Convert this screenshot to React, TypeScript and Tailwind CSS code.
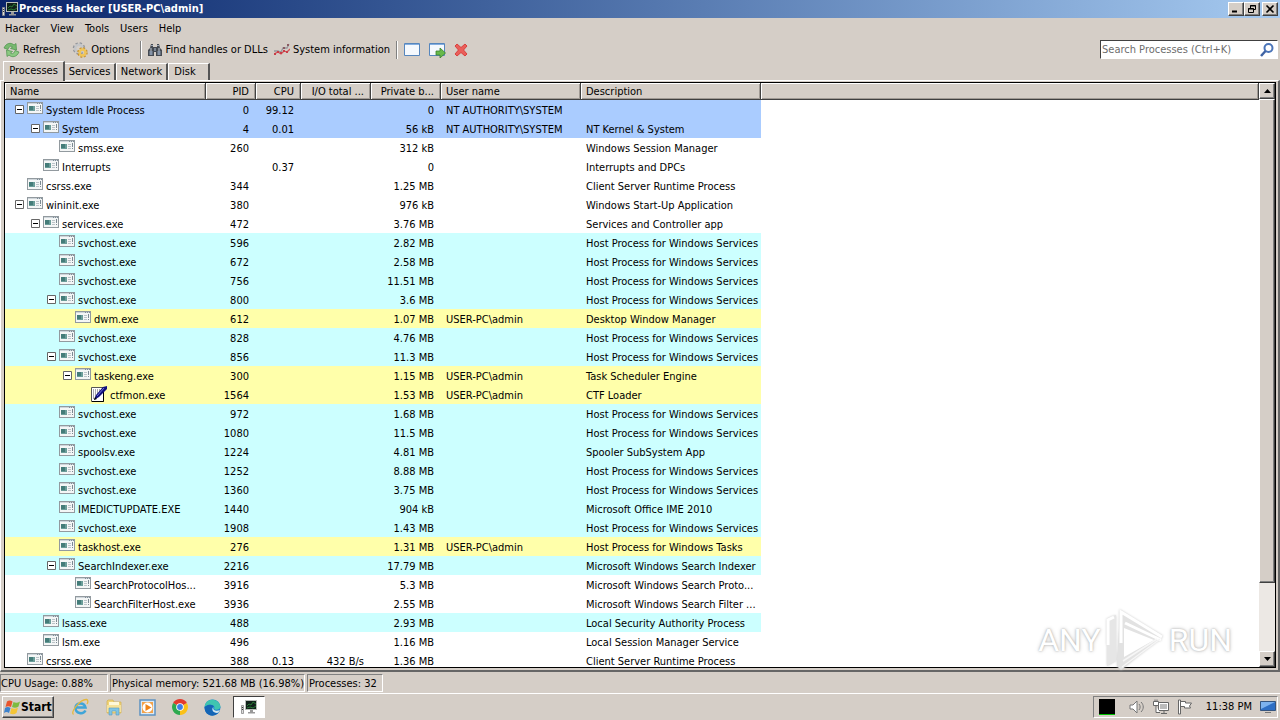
import type { ReactNode } from "react";

type Tone = "system" | "service" | "own" | "plain";

interface Process {
    name: string;
    depth: number;
    open?: boolean;
    pid: string;
    cpu?: string;
    io?: string;
    mem: string;
    user?: string;
    desc?: string;
    tone: Tone;
}

const tones: Record<Tone, string> = {
    system: "bg-[#aaccff]",
    service: "bg-[#ccffff]",
    own: "bg-[#ffffaa]",
    plain: "bg-white",
};

const HOST = "Host Process for Windows Services";
const SYSTEM = "NT AUTHORITY\\SYSTEM";
const ADMIN = "USER-PC\\admin";

const processes: Process[] = [
    { name: "System Idle Process", depth: 0, open: true, pid: "0", cpu: "99.12", mem: "0", user: SYSTEM, tone: "system" },
    { name: "System", depth: 1, open: true, pid: "4", cpu: "0.01", mem: "56 kB", user: SYSTEM, desc: "NT Kernel & System", tone: "system" },
    { name: "smss.exe", depth: 2, pid: "260", mem: "312 kB", desc: "Windows Session Manager", tone: "plain" },
    { name: "Interrupts", depth: 1, pid: "", cpu: "0.37", mem: "0", desc: "Interrupts and DPCs", tone: "plain" },
    { name: "csrss.exe", depth: 0, pid: "344", mem: "1.25 MB", desc: "Client Server Runtime Process", tone: "plain" },
    { name: "wininit.exe", depth: 0, open: true, pid: "380", mem: "976 kB", desc: "Windows Start-Up Application", tone: "plain" },
    { name: "services.exe", depth: 1, open: true, pid: "472", mem: "3.76 MB", desc: "Services and Controller app", tone: "plain" },
    { name: "svchost.exe", depth: 2, pid: "596", mem: "2.82 MB", desc: HOST, tone: "service" },
    { name: "svchost.exe", depth: 2, pid: "672", mem: "2.58 MB", desc: HOST, tone: "service" },
    { name: "svchost.exe", depth: 2, pid: "756", mem: "11.51 MB", desc: HOST, tone: "service" },
    { name: "svchost.exe", depth: 2, open: true, pid: "800", mem: "3.6 MB", desc: HOST, tone: "service" },
    { name: "dwm.exe", depth: 3, pid: "612", mem: "1.07 MB", user: ADMIN, desc: "Desktop Window Manager", tone: "own" },
    { name: "svchost.exe", depth: 2, pid: "828", mem: "4.76 MB", desc: HOST, tone: "service" },
    { name: "svchost.exe", depth: 2, open: true, pid: "856", mem: "11.3 MB", desc: HOST, tone: "service" },
    { name: "taskeng.exe", depth: 3, open: true, pid: "300", mem: "1.15 MB", user: ADMIN, desc: "Task Scheduler Engine", tone: "own" },
    { name: "ctfmon.exe", depth: 4, pid: "1564", mem: "1.53 MB", user: ADMIN, desc: "CTF Loader", tone: "own" },
    { name: "svchost.exe", depth: 2, pid: "972", mem: "1.68 MB", desc: HOST, tone: "service" },
    { name: "svchost.exe", depth: 2, pid: "1080", mem: "11.5 MB", desc: HOST, tone: "service" },
    { name: "spoolsv.exe", depth: 2, pid: "1224", mem: "4.81 MB", desc: "Spooler SubSystem App", tone: "service" },
    { name: "svchost.exe", depth: 2, pid: "1252", mem: "8.88 MB", desc: HOST, tone: "service" },
    { name: "svchost.exe", depth: 2, pid: "1360", mem: "3.75 MB", desc: HOST, tone: "service" },
    { name: "IMEDICTUPDATE.EXE", depth: 2, pid: "1440", mem: "904 kB", desc: "Microsoft Office IME 2010", tone: "service" },
    { name: "svchost.exe", depth: 2, pid: "1908", mem: "1.43 MB", desc: HOST, tone: "service" },
    { name: "taskhost.exe", depth: 2, pid: "276", mem: "1.31 MB", user: ADMIN, desc: "Host Process for Windows Tasks", tone: "own" },
    { name: "SearchIndexer.exe", depth: 2, open: true, pid: "2216", mem: "17.79 MB", desc: "Microsoft Windows Search Indexer", tone: "service" },
    { name: "SearchProtocolHos...", depth: 3, pid: "3916", mem: "5.3 MB", desc: "Microsoft Windows Search Proto...", tone: "plain" },
    { name: "SearchFilterHost.exe", depth: 3, pid: "3936", mem: "2.55 MB", desc: "Microsoft Windows Search Filter ...", tone: "plain" },
    { name: "lsass.exe", depth: 1, pid: "488", mem: "2.93 MB", desc: "Local Security Authority Process", tone: "service" },
    { name: "lsm.exe", depth: 1, pid: "496", mem: "1.16 MB", desc: "Local Session Manager Service", tone: "plain" },
    { name: "csrss.exe", depth: 0, pid: "388", cpu: "0.13", io: "432 B/s", mem: "1.36 MB", desc: "Client Server Runtime Process", tone: "plain" },
];

const indents = ["pl-[10px]", "pl-[26px]", "pl-[42px]", "pl-[58px]", "pl-[74px]"];

const raised = "border border-t-white border-l-white border-r-[#404040] border-b-[#404040] bg-[#d5cec7] shadow-[inset_-1px_-1px_0_#808080]";
const sunken = "border border-t-[#808080] border-l-[#808080] border-r-white border-b-white";

function AppIcon() {
    return (
        <svg width="16" height="16" viewBox="0 0 16 16" className="shrink-0">
            <path d="M.5 6.500h2v8h-2z" fill="#ddd" stroke="#888" strokeWidth=".8" />
            <path d="M1 8.500h1M1 10.500h1" stroke="#333" />
            <rect x="4.500" y="1.500" width="11" height="9" fill="#10201a" stroke="#b8bdb8" />
            <path d="M6 7l2-2 2 1 2-3 3 2M6 9l3-1 3 1 3-2" stroke="#2f8f3c" strokeWidth=".8" fill="none" />
            <path d="M9 11h3v2h2v1.500H7V13h2z" fill="#999" />
        </svg>
    );
}

function ProcessIcon() {
    return (
        <svg width="16" height="12" viewBox="0 0 16 12" className="mt-[2px] shrink-0">
            <rect x=".5" y=".5" width="15" height="11" fill="#f4f6f6" stroke="#929a9f" />
            <path d="M1 1.500h14" stroke="#cfd6db" />
            <path d="M10 1.500h1M12 1.500h1M14 1.500h1" stroke="#7f8d98" />
            <rect x="2" y="4" width="6" height="5" fill="#6a9d99" />
            <path d="M2 4h4v4H2z" fill="#447c79" />
            <path d="M9 4.500h3M9 6.500h3M9 8.500h3" stroke="#bcc4c9" />
            <path d="M13.500 3v4M13.500 8v1" stroke="#7c8a93" />
        </svg>
    );
}

function PenIcon() {
    return (
        <svg width="16" height="16" viewBox="0 0 16 16" className="mt-px shrink-0">
            <path d="M.5 1.500h12v14H.5z" fill="#fff" stroke="#555" />
            <path d="M2 4h9M2 6h8M2 8h6M2 10h4M2 12h3" stroke="#555" strokeDasharray="1 1" />
            <path d="M12.500 5v10.500H1" stroke="#000" fill="none" />
            <path d="M3 14l2-5 7-8 4-1v3l-8 8z" fill="#10107c" />
            <path d="M6 10l7-8" stroke="#7474dd" />
            <path d="M3 14l1-3 2 2z" fill="#000" />
        </svg>
    );
}

function RefreshIcon() {
    return (
        <svg width="17" height="16" viewBox="0 0 17 16">
            <path d="M1 6C3 1 8 0 11 3l2-1.500.5 6.500-6-1.500L9.500 5C7.500 3.500 6 4.500 5 7.500z" fill="#79ba70" stroke="#4b8f4a" strokeWidth=".7" />
            <path d="M16 10c-2 5-7 6-10 3l-2 1.500L3.500 8l6 1.500L7.500 11c2 1.500 3.500.5 4.500-2.500z" fill="#8cc982" stroke="#4b8f4a" strokeWidth=".7" />
        </svg>
    );
}

function GearIcon() {
    return (
        <svg width="16" height="16" viewBox="0 0 16 16" fill="none">
            <circle cx="7" cy="6.500" r="5" stroke="#94969b" strokeWidth="2.500" strokeDasharray="2.200 1.730" />
            <circle cx="7" cy="6.500" r="3.800" stroke="#c4c6c9" strokeWidth="2.500" />
            <circle cx="10.500" cy="10.500" r="4" stroke="#c48f2e" strokeWidth="2.500" strokeDasharray="1.800 1.340" />
            <circle cx="10.500" cy="10.500" r="2.900" stroke="#f0c456" strokeWidth="2.500" />
        </svg>
    );
}

function BinocularsIcon() {
    return (
        <svg width="14" height="14" viewBox="0 0 14 14">
            <path d="M3 1h2v3h4V1h2l1 4 2 2v6H8V9H6v4H0V7l2-2z" fill="#454a52" />
            <path d="M3 2.500h2M9 2.500h2" stroke="#9aa5b4" />
            <path d="M1.500 8h3v4h-3zM9.500 8h3v4h-3z" fill="#8694a8" />
            <path d="M3 5v3M11 5v3" stroke="#c2cad4" />
            <path d="M6 5h2v3H6z" fill="#7b8694" />
        </svg>
    );
}

function GraphIcon() {
    return (
        <svg width="16" height="14" viewBox="0 0 16 14" fill="none">
            <path d="M0 8h4l3 1 2-4 4 0 2-4" stroke="#97979c" strokeWidth="1.300" />
            <path d="M0 11l4-2 3 2 3-3 3 1 3-3" stroke="#d3545a" strokeWidth="1.300" />
            <path d="M0 10h2v2H0zM3 8h2v2H3zM6 9h2v2H6zM9 7h2v2H9zM12 8h2v2h-2z" fill="#c93e48" />
            <path d="M9 4h2v2H9zM13 1h2v2h-2z" fill="#8b5a62" />
        </svg>
    );
}

function WindowIcon({ arrow = false }: { arrow?: boolean }) {
    return (
        <svg width="17" height="16" viewBox="0 0 17 16">
            <path d="M.5 1.500h15v12H.5z" fill="#f5f9fe" stroke="#5686bd" />
            <path d="M1 2.500h14" stroke="#84aee0" />
            {arrow && <path d="M7 9h4V6l5.500 5-5.500 5v-3H7z" fill="#67b94a" stroke="#3b812d" strokeWidth=".8" />}
        </svg>
    );
}

function CrossIcon() {
    return (
        <svg width="14" height="14" viewBox="0 0 14 14">
            <path d="M1 3l2-2 4 3.500L11 1l2 2-3.500 4L13 11l-2 2-4-3.500L3 13l-2-2 3.500-4z" fill="#ea5f5a" stroke="#d9403e" strokeLinejoin="round" />
        </svg>
    );
}

function ToolButton({ icon, label }: { icon: ReactNode; label: string }) {
    return (
        <button className="flex h-5 items-center gap-[3px] whitespace-nowrap">
            {icon}
            {label}
        </button>
    );
}

function Separator() {
    return <span className="h-[18px] w-[2px] border-l border-[#808080] bg-white" />;
}

function CaptionButton({ label, children }: { label: string; children: ReactNode }) {
    return (
        <button aria-label={label} className={`flex h-[14px] w-4 items-center justify-center ${raised}`}>
            <svg width="10" height="10" viewBox="0 0 10 10" fill="none" stroke="#000">
                {children}
            </svg>
        </button>
    );
}

function ScrollButton({ label, d }: { label: string; d: string }) {
    return (
        <button aria-label={label} className={`flex h-4 w-4 shrink-0 items-center justify-center ${raised}`}>
            <svg width="7" height="4" viewBox="0 0 7 4">
                <path d={d} />
            </svg>
        </button>
    );
}

function Head({ children, right }: { children?: ReactNode; right?: boolean }) {
    return (
        <th
            className={`h-[17px] overflow-hidden bg-[#d5cec7] pt-px pb-0 font-normal whitespace-nowrap shadow-[inset_-1px_-1px_0_#404040,inset_1px_1px_0_#fff,inset_-2px_-2px_0_#a09a94] ${right ? "pr-[7px] pl-0 text-right" : "px-[5px] text-left"}`}
        >
            {children}
        </th>
    );
}

function ProcessRow({ p }: { p: Process }) {
    const cell = `pt-[3px] pr-[7px] pb-0 pl-0 text-right ${tones[p.tone]}`;
    const textCell = `pt-[3px] pr-0 pb-0 pl-[5px] ${tones[p.tone]}`;
    return (
        <tr className="h-[19px] whitespace-nowrap">
            <td className={`p-0 ${tones[p.tone]}`}>
                <div className={`flex h-[19px] items-start gap-[3px] ${indents[p.depth]}`}>
                    {p.open ? (
                        <button aria-label={`Collapse ${p.name}`} className="mt-[5px] h-[9px] w-[9px] shrink-0">
                            <svg width="9" height="9" viewBox="0 0 9 9">
                                <path d="M.5 .5h8v8h-8z" fill="#fff" stroke="#666" />
                                <path d="M2 4.500h5" stroke="#000" />
                            </svg>
                        </button>
                    ) : (
                        <span className="w-[9px] shrink-0" />
                    )}
                    {p.name === "ctfmon.exe" ? <PenIcon /> : <ProcessIcon />}
                    <span className="pt-[3px]">{p.name}</span>
                </div>
            </td>
            <td className={cell}>{p.pid}</td>
            <td className={cell}>{p.cpu}</td>
            <td className={cell}>{p.io}</td>
            <td className={cell}>{p.mem}</td>
            <td className={textCell}>{p.user}</td>
            <td className={textCell}>{p.desc}</td>
            <td className="p-0" />
        </tr>
    );
}

function Watermark() {
    return (
        <div className="pointer-events-none absolute right-[43px] -bottom-1 flex items-center gap-1 font-[Roboto,'Liberation_Sans',sans-serif] text-[32px] leading-[62px] text-white [text-shadow:0_0_2px_#aaa,0_0_4px_#ccc]">
            <span>ANY</span>
            <svg width="60" height="62" viewBox="0 0 60 62" className="drop-shadow-[0_0_1px_#ccc]">
                <path d="M2 10l9-4v46l-9 5z" fill="#e6e6e6" />
                <path d="M15 1l43 26-42 34-4-4z" fill="#e2e2e2" />
                <path d="M19 19l30 12-30 17z" fill="#fff" />
                <path d="M3 36V11l6-3M16 34V3l41 25M20 14l36 17" stroke="#fff" strokeWidth="3" fill="none" />
                <path d="M18 52l34-22M17 58l38-28" stroke="#f6f6f6" strokeWidth="1.500" fill="none" />
            </svg>
            <span>RUN</span>
        </div>
    );
}

function InternetExplorerIcon() {
    return (
        <svg width="18" height="18" viewBox="0 0 18 18" fill="none">
            <path d="M14.500 12.500C12 17 4.500 15.500 4.500 10S13 3.500 14.500 9.500H5" stroke="#3fa5d8" strokeWidth="2.500" />
            <path d="M2.500 16.500C-.5 14 9 1 15.500 1.500c2 .5 1.500 3 .5 4.500" stroke="#e5b83c" strokeWidth="1.300" />
        </svg>
    );
}

function ExplorerIcon() {
    return (
        <svg width="18" height="18" viewBox="0 0 18 18">
            <path d="M2 3l1-1h5l1 2h7v11H2z" fill="#f0d477" stroke="#d2b052" strokeWidth=".7" />
            <path d="M4 4h10v4H4z" fill="#fff8d8" />
            <path d="M2 7h14v7H2z" fill="#f6e29a" />
            <path d="M4 10h10v7h-3v-4H7v4H4z" fill="#7fc4e4" stroke="#579cbf" strokeWidth=".6" />
        </svg>
    );
}

function PlayerIcon() {
    return (
        <svg width="17" height="17" viewBox="0 0 17 17">
            <path d="M1 1h15v15H1z" fill="#dceaf5" stroke="#5d93c2" strokeWidth="1.500" />
            <path d="M3 3h11v11H3z" fill="#f3a24a" />
            <circle cx="8.500" cy="8.500" r="5" fill="#fff" />
            <path d="M6.500 5v7l6-3.500z" fill="#f08418" />
        </svg>
    );
}

function ChromeIcon() {
    return (
        <svg width="16" height="16" viewBox="0 0 16 16">
            <path d="M8 8L1.100 4a8 8 0 0 1 13.800 0z" fill="#e33b2e" />
            <path d="M8 8L14.900 4A8 8 0 0 1 8 16z" fill="#fbc116" />
            <path d="M8 8v8A8 8 0 0 1 1.100 4z" fill="#2da94f" />
            <circle cx="8" cy="8" r="3.800" fill="#fff" />
            <circle cx="8" cy="8" r="2.900" fill="#3d7fe8" />
        </svg>
    );
}

function EdgeIcon() {
    return (
        <svg width="17" height="17" viewBox="0 0 17 17">
            <circle cx="8.500" cy="8.500" r="8" fill="#1a7fd0" />
            <path d="M.6 8C1-1 14-2 16.400 7c.6 4-5 4.500-6.400 3 2-4-4-6-9.400-2z" fill="#3fc5b0" />
            <path d="M.6 8C5 4 10 6 9.500 8 7 9 7 14 14 14 8 20 0 15 .6 8z" fill="#1565b5" />
            <path d="M9.500 8c-1.500 3 3 5 6.500 3-1 2-2 3-3 3-4 0-6-4-3.500-6z" fill="#d5e6ee" />
        </svg>
    );
}

function StartFlag() {
    return (
        <svg width="16" height="16" viewBox="0 0 16 16">
            <path d="M3 2.500c2-1.500 4-1 5.500 0L7 8C5 7 3.500 7 1.500 8z" fill="#e8542c" />
            <path d="M9.500 3c2 1 4 1 6.500-.5L14.500 7.500c-2 1.500-4.500 1.500-6.500.5z" fill="#7dbb3f" />
            <path d="M1 9c2-1.500 4-1 5.500 0l-1.500 5c-2-1.500-3.500-1-5 0z" fill="#3d82cc" />
            <path d="M7.500 9c2 1 4 1 6.500-.5L12.500 14c-2 1.500-4.500 1.500-6.500.5z" fill="#f4c536" />
        </svg>
    );
}

const quickLaunch = [
    { label: "Internet Explorer", icon: <InternetExplorerIcon /> },
    { label: "Windows Explorer", icon: <ExplorerIcon /> },
    { label: "Media Player", icon: <PlayerIcon /> },
    { label: "Google Chrome", icon: <ChromeIcon /> },
    { label: "Microsoft Edge", icon: <EdgeIcon /> },
];

export default function App() {
    return (
        <div className="flex h-screen flex-col overflow-hidden bg-[#d5cec7] font-['DejaVu_Sans_Condensed','DejaVu_Sans',sans-serif] text-[11px] leading-4 text-black">
            <header className="flex h-[18px] shrink-0 items-center bg-linear-to-r from-[#0a246a] to-[#a6caf0] pr-[2px] pl-[2px]">
                <AppIcon />
                <h1 className="ml-px flex-1 font-bold text-white">Process Hacker [USER-PC\admin]</h1>
                <CaptionButton label="Minimize">
                    <path d="M1 7.500h5" strokeWidth="2" />
                </CaptionButton>
                <CaptionButton label="Restore">
                    <path d="M3.500 4V1.500h5v4H7M3 2h6M1.500 4.500h5v4h-5zM1 5h6" />
                </CaptionButton>
                <span className="w-[2px]" />
                <CaptionButton label="Close">
                    <path d="M1.500 1.500l7 7M8.500 1.500l-7 7" strokeWidth="1.600" />
                </CaptionButton>
            </header>

            <nav className="flex h-5 shrink-0 items-center gap-[11px] pt-[2px] pl-[5px]">
                {["Hacker", "View", "Tools", "Users", "Help"].map((item) => (
                    <button key={item}>{item}</button>
                ))}
            </nav>

            <div className="flex h-[22px] shrink-0 items-center pt-px pr-[2px] pl-[3px]">
                <div className="flex flex-1 items-center gap-[6px]">
                    <div className="mr-[5px] flex items-center gap-3">
                        <ToolButton icon={<RefreshIcon />} label="Refresh" />
                        <ToolButton icon={<GearIcon />} label="Options" />
                    </div>
                    <Separator />
                    <ToolButton icon={<BinocularsIcon />} label="Find handles or DLLs" />
                    <ToolButton icon={<GraphIcon />} label="System information" />
                    <Separator />
                    <div className="flex items-center gap-2">
                        <button aria-label="Window">
                            <WindowIcon />
                        </button>
                        <button aria-label="Find window">
                            <WindowIcon arrow />
                        </button>
                        <button aria-label="Terminate">
                            <CrossIcon />
                        </button>
                    </div>
                </div>
                <label className="flex h-[19px] w-[178px] items-center border border-t-[#404040] border-l-[#404040] border-r-white border-b-white bg-white pr-[3px] pl-px">
                    <input
                        aria-label="Search Processes"
                        placeholder="Search Processes (Ctrl+K)"
                        className="h-4 w-0 flex-1 outline-none placeholder:text-[#6d6d6d]"
                    />
                    <svg width="14" height="14" viewBox="0 0 14 14" fill="none">
                        <circle cx="8.500" cy="5" r="4" stroke="#4a74b8" strokeWidth="2" />
                        <path d="M5.500 8L1 13" stroke="#4064a5" strokeWidth="2.500" />
                    </svg>
                </label>
            </div>

            <div role="tablist" className="flex h-5 shrink-0 items-end pl-[3px]">
                <button role="tab" aria-selected="true" className="relative -mb-px h-5 w-[62px] border-t border-r-2 border-l border-t-white border-l-white border-r-[#555] bg-[#d5cec7] pb-[2px]">
                    Processes
                </button>
                <button role="tab" aria-selected="false" className="h-[17px] w-[51px] border-t border-r-2 border-t-white border-r-[#555]">
                    Services
                </button>
                <button role="tab" aria-selected="false" className="h-[17px] w-[52px] border-t border-r-2 border-l border-t-white border-l-white border-r-[#555]">
                    Network
                </button>
                <button role="tab" aria-selected="false" className="h-[17px] w-[42px] border-t border-r-2 border-l border-t-white border-l-white border-r-[#555] pr-[7px]">
                    Disk
                </button>
            </div>

            <main className="flex min-h-0 flex-1 border-t border-r-2 border-b-2 border-l border-t-white border-r-[#666] border-b-[#666] border-l-white pt-px pr-[2px] pb-[2px] pl-[3px]">
                <div className="relative flex min-w-0 flex-1 border border-black bg-white">
                    <div className="min-w-0 flex-1 overflow-hidden">
                        <table className="w-full table-fixed border-separate border-spacing-0">
                            <colgroup>
                                <col className="w-[201px]" />
                                <col className="w-[50px]" />
                                <col className="w-[45px]" />
                                <col className="w-[70px]" />
                                <col className="w-[70px]" />
                                <col className="w-[140px]" />
                                <col className="w-[180px]" />
                                <col />
                            </colgroup>
                            <thead>
                                <tr>
                                    <Head>Name</Head>
                                    <Head right>PID</Head>
                                    <Head right>CPU</Head>
                                    <Head right>I/O total ...</Head>
                                    <Head right>Private b...</Head>
                                    <Head>User name</Head>
                                    <Head>Description</Head>
                                    <Head />
                                </tr>
                            </thead>
                            <tbody>
                                {processes.map((p, i) => (
                                    <ProcessRow key={i} p={p} />
                                ))}
                            </tbody>
                        </table>
                    </div>
                    <div className="flex w-4 shrink-0 flex-col bg-[#ece8e4]">
                        <ScrollButton label="Scroll up" d="M0 4h7L3.500 0z" />
                        <div className="flex flex-1 flex-col">
                            <div className={`w-4 flex-[484] ${raised}`} />
                            <div className="flex-[68]" />
                        </div>
                        <ScrollButton label="Scroll down" d="M0 0h7L3.500 4z" />
                    </div>
                    <Watermark />
                </div>
            </main>

            <div className="flex h-[21px] shrink-0 items-center gap-[2px] whitespace-nowrap">
                <span className={`h-[18px] w-[108px] pt-px ${sunken}`}>CPU Usage: 0.88%</span>
                <span className={`h-[18px] w-[195px] pt-px pl-px ${sunken}`}>Physical memory: 521.68 MB (16.98%)</span>
                <span className={`h-[18px] w-[76px] pt-px pl-px ${sunken}`}>Processes: 32</span>
            </div>

            <footer className="flex h-[27px] shrink-0 items-center border-t border-white pr-[2px] pl-[2px]">
                <button className={`flex h-[22px] w-[52px] items-center gap-px pl-px text-[12px] font-bold ${raised}`}>
                    <StartFlag />
                    Start
                </button>
                <div className="ml-[17px] flex items-center gap-4">
                    {quickLaunch.map(({ label, icon }) => (
                        <button key={label} aria-label={label}>
                            {icon}
                        </button>
                    ))}
                </div>
                <button aria-label="Process Hacker" className="ml-3 flex h-[22px] w-8 items-center justify-center border border-t-[#404040] border-l-[#404040] border-r-white border-b-white bg-white">
                    <AppIcon />
                </button>
                <div className={`ml-auto flex h-[22px] items-center gap-2 pr-px pl-[5px] ${sunken}`}>
                    <span className="mr-[6px] h-4 w-4 border-b border-[#00c000] bg-black" />
                    <svg width="16" height="16" viewBox="0 0 16 16" fill="#fff" stroke="#777">
                        <path d="M1 6h3l4-4v12l-4-4H1z" />
                        <path d="M10 5c1.500 2 1.500 4 0 6M12 3c3 3 3 7 0 10" fill="none" />
                    </svg>
                    <svg width="16" height="16" viewBox="0 0 16 16" fill="#fff" stroke="#666">
                        <path d="M5.500 3.500h10v8h-10zM8 14.500h6M11 12v2" />
                        <path d="M7 5h7v5H7z" fill="#bbb" stroke="none" />
                        <path d="M.5 2.500h5v4h-5zM2 .5v2M4 .5v2M3 7v6.500h4" />
                    </svg>
                    <svg width="16" height="16" viewBox="0 0 16 16" fill="#fff" stroke="#666">
                        <path d="M1.500 1v14M3.500 2.500h5v1.500h6l-2 3 1 2h-6V7.500h-4z" />
                        <path d="M1.500 1h2v14h-2z" />
                    </svg>
                    <time className="ml-[5px] whitespace-nowrap">11:38 PM</time>
                    <svg width="16" height="14" viewBox="0 0 16 14">
                        <path d="M.5 1.500h15v9H.5z" fill="#2f6fc4" stroke="#35557f" />
                        <path d="M1 2h14L1 9z" fill="#7db2ee" />
                        <path d="M5 12.500h6" stroke="#777" />
                    </svg>
                </div>
            </footer>
        </div>
    );
}
